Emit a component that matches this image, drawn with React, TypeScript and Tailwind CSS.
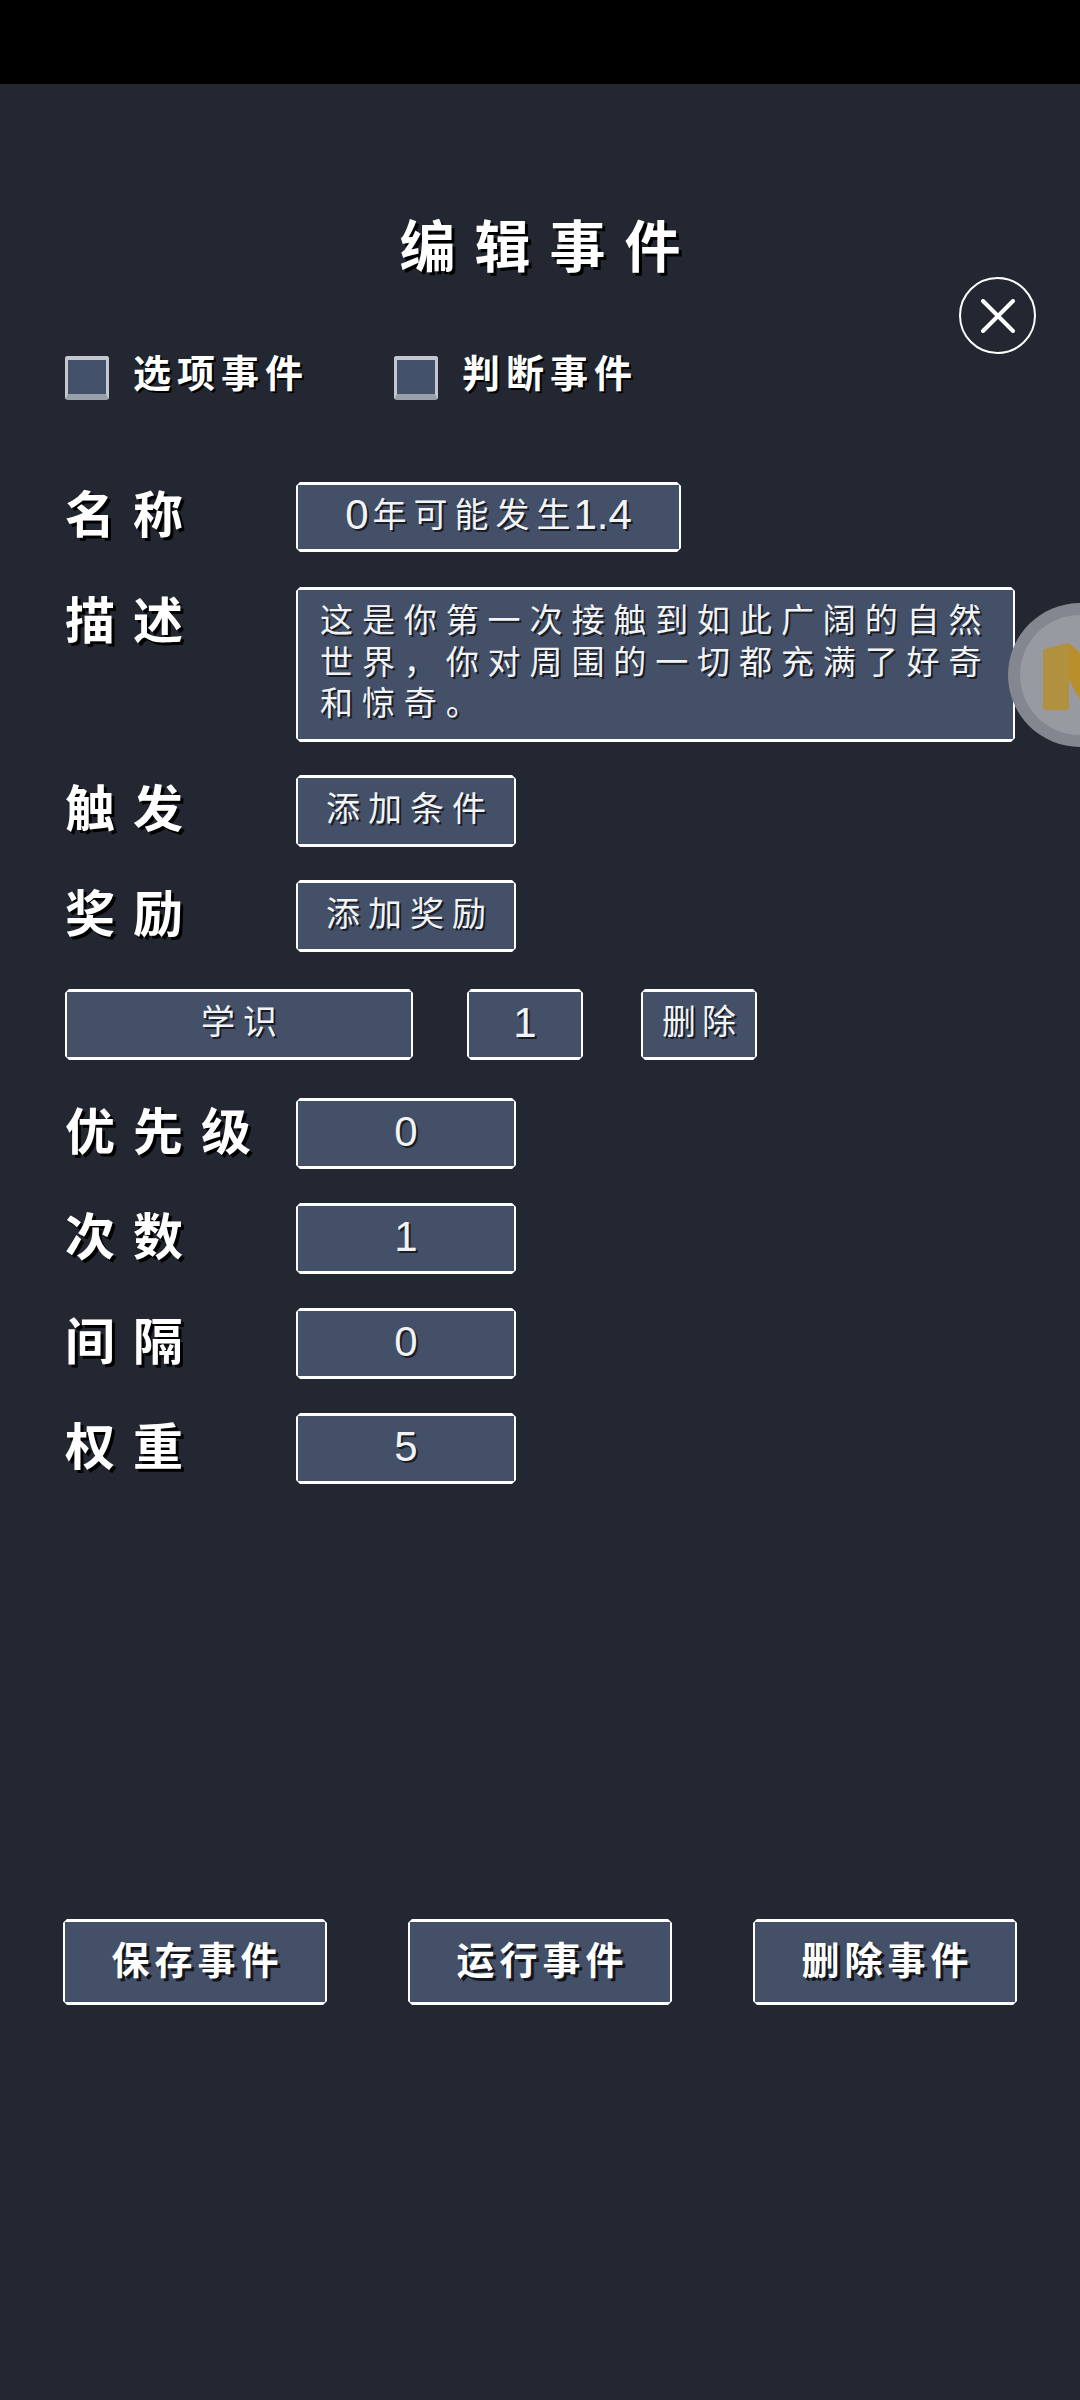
import React from "react";

const cut =
  "[clip-path:polygon(4px_0,calc(100%-4px)_0,100%_4px,100%_calc(100%-4px),calc(100%-4px)_100%,4px_100%,0_calc(100%-4px),0_4px)]";
const cjk = "[font-family:'Liberation_Sans','Noto_Sans_CJK_SC',sans-serif]";

function Box({ className, children }: { className: string; children: React.ReactNode }) {
  return (
    <div
      className={`flex items-center justify-center shrink-0 bg-[#435067] border-x-2 border-t-[3px] border-b-[3px] border-white text-[#f2f3f5] ${cut} ${className}`}
    >
      {children}
    </div>
  );
}

function Soft({ children, track = "tracking-[8px] pl-[8px]" }: { children: React.ReactNode; track?: string }) {
  return (
    <span className={`-mt-[5px] text-[34px] leading-none font-normal [text-shadow:2px_2px_0_#1a1d26] ${track}`}>
      {children}
    </span>
  );
}

function Num({ children }: { children: React.ReactNode }) {
  return <span className="-mt-[4px] text-[42px] leading-none [text-shadow:2px_2px_0_#1a1d26]">{children}</span>;
}

function Label({ children }: { children: React.ReactNode }) {
  return (
    <div className="w-[231px] shrink-0 -mt-[2px] text-[50px] leading-none font-bold tracking-[18px] text-white whitespace-nowrap [text-shadow:3px_3px_0_#000]">
      {children}
    </div>
  );
}

function Check({ children, className }: { children: React.ReactNode; className: string }) {
  return (
    <div className={`flex items-center ${className}`}>
      <div className="w-[44px] h-[44px] shrink-0 bg-[#44516a] border-x-[3px] border-t-[4px] border-b-[6px] border-x-[#c3c8cf] border-t-[#c3c8cf] border-b-[#98a0ab] rounded-[3px]" />
      <span className="ml-[24px] -mt-[8px] text-[38px] leading-none font-bold tracking-[6px] text-white whitespace-nowrap [text-shadow:2px_2px_0_#000]">
        {children}
      </span>
    </div>
  );
}

function Action({ children }: { children: React.ReactNode }) {
  return (
    <Box className="w-[264px] h-[86px]">
      <span className="-mt-[2px] text-[38px] leading-none font-bold tracking-[5px] pl-[5px] text-white [text-shadow:3px_3px_0_#14161d]">
        {children}
      </span>
    </Box>
  );
}

export default function App() {
  return (
    <div className={`relative w-[1080px] h-[2400px] overflow-hidden bg-[#232731] ${cjk}`}>
      <div className="h-[84px] bg-black" />

      <div className="mt-[134px] h-[60px] flex items-center justify-center text-[56px] leading-none font-bold tracking-[19px] pl-[19px] text-white [text-shadow:3px_3px_0_#000]">
        编辑事件
      </div>

      <div className="px-[65px]">
        <div className="mt-[78px] flex">
          <Check className="w-[329px]">选项事件</Check>
          <Check className="">判断事件</Check>
        </div>

        <div className="mt-[82px] flex items-center">
          <Label>名称</Label>
          <Box className="w-[385px] h-[70px]">
            <span className="-mt-[5px] flex items-center text-[34px] leading-none tracking-[7px] whitespace-nowrap [text-shadow:2px_2px_0_#1a1d26]">
              <span className="text-[42px] tracking-[4px]">0</span>
              年可能发生
              <span className="text-[42px] tracking-normal -ml-[4px]">1.4</span>
            </span>
          </Box>
        </div>

        <div className="mt-[35px] flex items-start">
          <div className="pt-[12px]">
            <Label>描述</Label>
          </div>
          <Box className="w-[719px] h-[155px] !items-start !justify-start pl-[22px] pt-[10px]">
            <span className="w-[684px] text-[33px] leading-[41.5px] tracking-[8.9px] [text-shadow:2px_2px_0_#1a1d26]">
              这是你第一次接触到如此广阔的自然世界，你对周围的一切都充满了好奇和惊奇。
            </span>
          </Box>
        </div>

        <div className="mt-[33px] flex items-center">
          <Label>触发</Label>
          <Box className="w-[220px] h-[72px]">
            <Soft>添加条件</Soft>
          </Box>
        </div>

        <div className="mt-[33px] flex items-center">
          <Label>奖励</Label>
          <Box className="w-[220px] h-[72px]">
            <Soft>添加奖励</Soft>
          </Box>
        </div>

        <div className="mt-[37px] flex items-center">
          <Box className="w-[348px] h-[71px]">
            <Soft>学识</Soft>
          </Box>
          <Box className="ml-[54px] w-[116px] h-[71px]">
            <Num>1</Num>
          </Box>
          <Box className="ml-[58px] w-[116px] h-[71px]">
            <Soft track="tracking-[6px] pl-[6px]">删除</Soft>
          </Box>
        </div>

        <div className="mt-[38px] flex flex-col gap-[34px]">
          {[
            ["优先级", "0"],
            ["次数", "1"],
            ["间隔", "0"],
            ["权重", "5"],
          ].map(([name, value]) => (
            <div key={name} className="flex items-center">
              <Label>{name}</Label>
              <Box className="w-[220px] h-[71px]">
                <Num>{value}</Num>
              </Box>
            </div>
          ))}
        </div>
      </div>

      <div className="mt-[435px] pl-[63px] flex gap-[81px]">
        <Action>保存事件</Action>
        <Action>运行事件</Action>
        <Action>删除事件</Action>
      </div>

      <button className="absolute left-[959px] top-[277px] w-[77px] h-[77px] rounded-full border-2 border-white flex items-center justify-center">
        <svg width="34" height="34" viewBox="0 0 34 34" fill="none" stroke="white" strokeWidth="4" strokeLinecap="round">
          <path d="M2 2 L32 32 M32 2 L2 32" />
        </svg>
      </button>

      <div className="absolute right-0 top-[603px] w-[72px] h-[144px]">
        <svg width="72" height="144" viewBox="0 0 72 144">
          <circle cx="72" cy="72" r="72" fill="#84878f" />
          <circle cx="72" cy="72" r="60" fill="#989aa2" />
          <path d="M37 46 L59 40 Q61 40 61 42 L61 105 Q61 107 59 107 L37 107 Q35 107 35 105 L35 48 Q35 46 37 46 Z" fill="#b0913f" />
          <path d="M61 40 L72 50 L72 97 L61 77 Z" fill="#b88f2b" />
        </svg>
      </div>
    </div>
  );
}
